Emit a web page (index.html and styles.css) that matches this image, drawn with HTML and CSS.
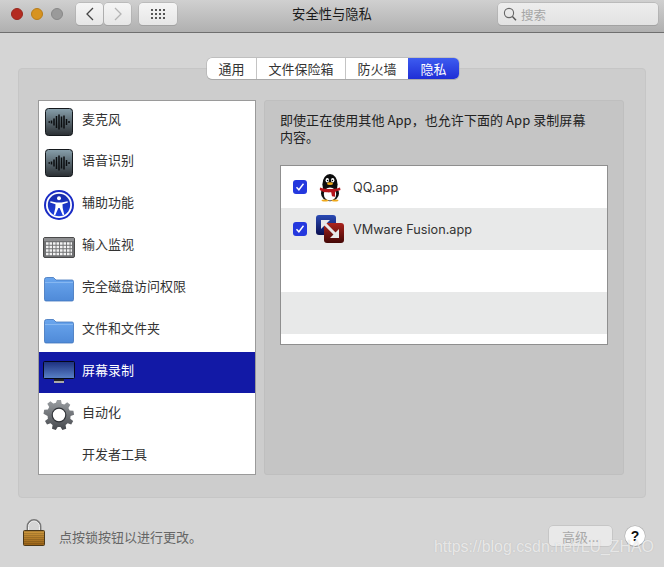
FILE: index.html
```html
<!DOCTYPE html>
<html lang="zh">
<head>
<meta charset="utf-8">
<title>安全性与隐私</title>
<link rel="stylesheet" href="styles.css">
</head>
<body>
<div class="window">
  <header class="titlebar">
    <div class="lights">
      <span class="light red"></span><span class="light amber"></span><span class="light grey"></span>
    </div>
    <div class="nav">
      <span class="btn nav-btn"><svg width="12" height="14" viewBox="0 0 12 14"><path d="M9 1 3 7l6 6" fill="none" stroke="#444" stroke-width="1.3"/></svg></span>
      <span class="btn nav-btn"><svg width="12" height="14" viewBox="0 0 12 14"><path d="m3 1 6 6-6 6" fill="none" stroke="#b4b4b4" stroke-width="1.3"/></svg></span>
    </div>
    <span class="btn grid-btn"><svg width="15" height="11" viewBox="0 0 15 11" fill="#555"><rect x="0" y="0" width="2" height="2"/><rect x="4" y="0" width="2" height="2"/><rect x="8" y="0" width="2" height="2"/><rect x="12" y="0" width="2" height="2"/><rect x="0" y="4" width="2" height="2"/><rect x="4" y="4" width="2" height="2"/><rect x="8" y="4" width="2" height="2"/><rect x="12" y="4" width="2" height="2"/><rect x="0" y="8" width="2" height="2"/><rect x="4" y="8" width="2" height="2"/><rect x="8" y="8" width="2" height="2"/><rect x="12" y="8" width="2" height="2"/></svg></span>
    <h1 class="title">安全性与隐私</h1>
    <div class="search">
      <svg width="14" height="14" viewBox="0 0 14 14"><circle cx="6" cy="6" r="4.6" fill="none" stroke="#666" stroke-width="1.1"/><path d="m9.4 9.4 3.6 3.8" stroke="#555" stroke-width="1.4"/></svg>
      <span>搜索</span>
    </div>
  </header>

  <main class="content">
    <nav class="tabs">
      <span class="tab t1">通用</span><span class="tab t2">文件保险箱</span><span class="tab t3">防火墙</span><span class="tab t4 active">隐私</span>
    </nav>
    <section class="panel">
      <ul class="sidebar">
        <li class="item"><span class="ico"><svg width="28" height="28" viewBox="0 0 28 28"><use href="#wave"/></svg></span><span class="label">麦克风</span></li>
        <li class="item"><span class="ico"><svg width="28" height="28" viewBox="0 0 28 28"><use href="#wave"/></svg></span><span class="label">语音识别</span></li>
        <li class="item"><span class="ico"><svg width="32" height="32" viewBox="0 0 32 32"><defs><linearGradient id="ab" x1="0" y1="0" x2="0" y2="1"><stop offset="0" stop-color="#1a2ba8"/><stop offset="1" stop-color="#1d3fe0"/></linearGradient></defs><circle cx="16" cy="16" r="15" fill="#1a2bc4"/><circle cx="16" cy="16" r="13" fill="#fff"/><circle cx="16" cy="16" r="11.2" fill="url(#ab)"/><circle cx="16" cy="9.2" r="2" fill="#fff"/><path d="M7.5 12.2 13.5 13.4h5l6-1.2.4 1.3-5.4 1.8.2 3.6 1.6 7h-1.6L16.6 19h-1.2l-3.1 6.9h-1.6l1.6-7 .2-3.6-5.4-1.8z" fill="#fff"/></svg></span><span class="label">辅助功能</span></li>
        <li class="item"><span class="ico"><svg width="32" height="21" viewBox="0 0 32 21"><rect x="0.500" y="0.500" width="31" height="20" rx="1.500" fill="#6f7072" stroke="#4a4a4a"/><rect x="1" y="1" width="30" height="3" fill="#8e8f91"/><path d="M3 6.500H29M3 10H29M3 13.500H29M3 17H29" stroke="#f2f2f2" stroke-width="2.500" stroke-dasharray="2.600 .9"/></svg></span><span class="label">输入监视</span></li>
        <li class="item"><span class="ico"><svg width="30" height="26" viewBox="0 0 30 26"><use href="#folder"/></svg></span><span class="label">完全磁盘访问权限</span></li>
        <li class="item"><span class="ico"><svg width="30" height="26" viewBox="0 0 30 26"><use href="#folder"/></svg></span><span class="label">文件和文件夹</span></li>
        <li class="item selected"><span class="ico"><svg width="32" height="24" viewBox="0 0 32 24"><defs><linearGradient id="scr" x1="0" y1="0" x2="0" y2="1"><stop offset="0" stop-color="#1c2f7e"/><stop offset="1" stop-color="#5a82c8"/></linearGradient></defs><rect x="0.5" y="0.5" width="31" height="17" rx="1" fill="url(#scr)" stroke="#05071c"/><rect x="11" y="18" width="10" height="3" fill="#222"/><rect x="11" y="20" width="10" height="2" fill="#aaa"/></svg></span><span class="label">屏幕录制</span></li>
        <li class="item"><span class="ico"><svg width="32" height="32" viewBox="0 0 32 32"><defs><linearGradient id="gear" x1="0" y1="0" x2="0" y2="1"><stop offset="0" stop-color="#9a9ea2"/><stop offset="1" stop-color="#45484d"/></linearGradient></defs><path d="M14 1h4l.7 3.700 2.600.9 2.900-2.400 3.100 2.600-1.900 3.200 1.300 2.400 3.700.3.700 4-3.500 1.300-.3 2.700 2.900 2.300-2 3.500-3.500-1.300-2.100 1.800.6 3.700-3.800 1.400-1.900-3.200h-2.800l-1.900 3.200-3.800-1.400.6-3.700-2.100-1.800-3.500 1.300-2-3.500 2.900-2.300-.3-2.700L.5 14.700l.7-4 3.700-.3 1.300-2.400-1.900-3.200 3.100-2.600 2.900 2.400 2.600-.9z" fill="url(#gear)"/><circle cx="16" cy="16" r="6.800" fill="#fff" stroke="#303338" stroke-width="1.200"/></svg></span><span class="label">自动化</span></li>
        <li class="item"><span class="ico"></span><span class="label">开发者工具</span></li>
      </ul>
      <div class="detail">
        <p class="desc">即使正在使用其他 App，也允许下面的 App 录制屏幕内容。</p>
        <div class="applist">
          <div class="row">
            <span class="check"><svg width="10" height="10" viewBox="0 0 10 10"><path d="m1.5 5.2 2.4 2.6 4.6-6" fill="none" stroke="#fff" stroke-width="1.4"/></svg></span>
            <span class="appbox"><svg width="26" height="31" viewBox="0 0 26 30"><ellipse cx="13" cy="12" rx="7.600" ry="10.500" fill="#0c0c0c"/><ellipse cx="13" cy="21" rx="9" ry="7.800" fill="#111"/><ellipse cx="13" cy="21.500" rx="6.200" ry="6.600" fill="#fff"/><ellipse cx="10.300" cy="7.800" rx="1.700" ry="2.200" fill="#fff"/><ellipse cx="15.700" cy="7.800" rx="1.700" ry="2.200" fill="#fff"/><circle cx="10.600" cy="8" r=".8" fill="#000"/><circle cx="15.400" cy="8" r=".8" fill="#000"/><ellipse cx="13" cy="11.200" rx="3" ry="1.400" fill="#f0a91c"/><path d="M3 15c6 2 14 2 20 0l.5 2.500-5.500 1.800v5l-3-.5-.8-4c-2 .2-3 .2-4.400 0L6.500 19.500 2.800 17.600z" fill="#b5161c"/><ellipse cx="8" cy="28" rx="3.400" ry="1.100" fill="#f0a91c"/><ellipse cx="18" cy="28" rx="3.400" ry="1.100" fill="#f0a91c"/></svg></span>
            <span class="appname">QQ.app</span>
          </div>
          <div class="row alt">
            <span class="check"><svg width="10" height="10" viewBox="0 0 10 10"><path d="m1.5 5.2 2.4 2.6 4.6-6" fill="none" stroke="#fff" stroke-width="1.4"/></svg></span>
            <span class="appbox"><svg width="28" height="29" viewBox="0 0 28 29"><defs><linearGradient id="vb" x1="0" y1="0" x2="0" y2="1"><stop offset="0" stop-color="#2a4ab4"/><stop offset="1" stop-color="#0a0f50"/></linearGradient><linearGradient id="vr" x1="0" y1="0" x2="0" y2="1"><stop offset="0" stop-color="#ab241e"/><stop offset="1" stop-color="#430806"/></linearGradient></defs><rect x="0" y="0" width="20" height="20" rx="3" fill="url(#vb)"/><rect x="8" y="8" width="20" height="20" rx="3" fill="url(#vr)"/><path d="M5 5H14L5 14Z" fill="#e8e9e9"/><path d="M8 8 20.500 20.500" stroke="#e8e9e9" stroke-width="3"/><path d="M23 14V23H14Z" fill="#e8e9e9"/></svg></span>
            <span class="appname">VMware Fusion.app</span>
          </div>
          <div class="row"></div>
          <div class="row alt"></div>
        </div>
      </div>
    </section>
    <footer class="footer">
      <svg class="lock" width="24" height="28" viewBox="0 0 24 28"><defs><linearGradient id="lk" x1="0" y1="0" x2="0" y2="1"><stop offset="0" stop-color="#cf9a3f"/><stop offset="1" stop-color="#9a6216"/></linearGradient><pattern id="lines" width="4" height="2" patternUnits="userSpaceOnUse"><rect width="4" height="1" fill="#000" opacity=".14"/></pattern></defs><path d="M5.500 12V7.500a6.500 6.500 0 0 1 13 0V12" fill="none" stroke="#777" stroke-width="1.800"/><path d="M6.500 12V7.500a5.500 5.500 0 0 1 11 0V12" fill="none" stroke="#f2f2f2" stroke-width="1"/><rect x="1.500" y="11.500" width="21" height="15" rx="1" fill="url(#lk)" stroke="#4c3818"/><rect x="2" y="12" width="20" height="14" fill="url(#lines)"/></svg>
      <span class="hint">点按锁按钮以进行更改。</span>
      <span class="advanced">高级...</span>
      <span class="help">?</span>
    </footer>
  </main>
  <span class="watermark">https://blog.csdn.net/LU_ZHAO</span>
</div>
<svg class="defs" width="0" height="0">
  <defs>
    <linearGradient id="wb" x1="0" y1="0" x2="0" y2="1"><stop offset="0" stop-color="#88a0ac"/><stop offset="1" stop-color="#2a2e32"/></linearGradient>
    <linearGradient id="fb" x1="0" y1="0" x2="0" y2="1"><stop offset="0" stop-color="#6aa6ee"/><stop offset="1" stop-color="#4f8ad8"/></linearGradient>
    <symbol id="wave" viewBox="0 0 28 28">
      <rect x="0.500" y="0.500" width="27" height="27" rx="3" fill="url(#wb)" stroke="#14181c"/>
      <path d="M3.500 14h1.500M6.500 12.500v3M9 10.500v7M11.500 8v12M14 6.500v15M16.500 8.500v11M19 7.500v13M21.500 11v6M24 13v2" stroke="#0b0d0f" stroke-width="1.500" fill="none"/>
    </symbol>
    <symbol id="folder" viewBox="0 0 30 26">
      <path d="M.5 3.500Q.5 1.500 2.500 1.500H9.500L12 4H28Q29.500 4 29.500 5.500V23.500Q29.500 25 28 25H2Q.5 25 .5 23.500Z" fill="url(#fb)" stroke="#3f74bb" stroke-width=".8"/>
      <path d="M1 6.500H29" stroke="#8fbdf2" stroke-width=".8"/>
    </symbol>
  </defs>
</svg>
</body>
</html>
```
FILE: styles.css
```css
* { box-sizing: border-box; }
html, body { margin: 0; padding: 0; }
body {
  width: 664px;
  height: 567px;
  overflow: hidden;
  background: #d5d5d5;
  font-family: "Noto Sans CJK SC", "Liberation Sans", sans-serif;
  font-size: 13px;
  color: #2a2a2a;
}
.defs { display: block; height: 0; }
.window { position: relative; width: 664px; height: 567px; display: flex; flex-direction: column; }

/* title bar */
.titlebar {
  height: 33px;
  flex: none;
  display: flex;
  align-items: flex-start;
  padding: 3px 6px 0 11px;
  background: linear-gradient(#d0d0d0, #b0b0b0);
  border-bottom: 1px solid #6f6f6f;
}
.lights { display: flex; gap: 8px; margin-top: 5px; flex: none; }
.light { width: 12px; height: 12px; border-radius: 50%; }
.red { background: #b42b20; border: 1px solid #97271d; }
.amber { background: #d7931f; border: 1px solid #b87d1a; }
.grey { background: #9a9a9a; border: 1px solid #888; }
.btn {
  display: flex;
  align-items: center;
  justify-content: center;
  flex: none;
  height: 22px;
  background: linear-gradient(#f5f5f5, #e6e6e6);
  border-radius: 4px;
  box-shadow: 0 0 0 .5px #a8a8a8, 0 1px 0 #9c9c9c;
}
.nav { display: flex; gap: 1px; margin-left: 13px; flex: none; }
.nav-btn { width: 27px; }
.grid-btn { width: 38px; margin-left: 8px; }
.title {
  flex: none;
  margin: 0 0 0 18px;
  width: 274px;
  font-size: 13.300px;
  line-height: 22px;
  font-weight: 400;
  color: #1a1a1a;
  text-align: center;
}
.search {
  flex: none;
  margin-left: 29px;
  width: 160px;
  height: 22px;
  display: flex;
  align-items: center;
  gap: 4px;
  padding-left: 5px;
  background: linear-gradient(#ededed, #e2e2e2);
  border-radius: 4px;
  box-shadow: 0 0 0 .5px #a8a8a8, 0 1px 0 #9c9c9c;
  color: #a5a5a5;
  font-size: 12.500px;
}

/* content */
.content { flex: 1; display: flex; flex-direction: column; padding: 25px 18px 0; }
.tabs {
  position: relative;
  z-index: 1;
  display: flex;
  align-self: flex-start;
  margin-left: 189px;
  height: 21px;
  border-radius: 5px;
  box-shadow: 0 0 0 .5px #a9a9a9, 0 1px 0 #a9a9a9;
  background: #fff;
}
.tab { display: flex; align-items: center; justify-content: center; font-size: 13px; color: #333; border-right: 1px solid #c4c4c4; }
.t1 { width: 50px; }
.t2 { width: 89px; }
.t3 { width: 62px; border-right: 0; }
.t4 { width: 51px; border: 0; }
.active { background: linear-gradient(#3d5cf0, #1f2ed6); color: #fff; border-radius: 0 5px 5px 0; }

.panel {
  margin-top: -11px;
  height: 430px;
  flex: none;
  display: flex;
  gap: 8px;
  padding: 31px 21px 22px 19px;
  background: #cdcdcd;
  border: 1px solid #c6c6c6;
  border-radius: 4px;
}
.sidebar {
  width: 218px;
  margin: 0;
  padding: 0;
  list-style: none;
  background: #fff;
  border: 1px solid #9a9a9a;
  flex: none;
  overflow: hidden;
}
.item {
  height: 42px;
  flex: none;
  display: flex;
  align-items: center;
  font-size: 13px;
  color: #333;
}
.sidebar .item:first-child { height: 41px; }
.selected { height: 41px; margin-bottom: 1px; background: #1219a6; color: #fff; }
.ico { width: 43px; flex: none; display: flex; justify-content: center; padding-right: 3px; }
.label { margin-bottom: 7px; }

.detail {
  width: 360px;
  flex: none;
  background: #c5c5c5;
  border: 1px solid #bfbfbf;
  border-radius: 3px;
  padding: 10px 15px 0;
  display: flex;
  flex-direction: column;
}
.desc { margin: 0; width: 312px; font-size: 13px; line-height: 17px; letter-spacing: .06px; color: #222; height: 54px; }
.applist { width: 328px; height: 180px; background: #fff; border: 1px solid #8f8f8f; overflow: hidden; }
.row { height: 42px; display: flex; align-items: center; background: #fff; }
.alt { background: #e8e9e9; }
.check {
  width: 14px;
  height: 14px;
  margin-left: 12px;
  flex: none;
  display: flex;
  align-items: center;
  justify-content: center;
  border-radius: 3px;
  background: #2438de;
}
.appbox { width: 30px; flex: none; margin-left: 8px; display: flex; justify-content: center; }
.appname { margin-left: 8px; font-family: "Inter", "Liberation Sans", sans-serif; font-size: 12.700px; color: #333; }

/* footer */
.footer { flex: 1; display: flex; align-items: flex-start; padding-top: 21px; }
.lock { margin-left: 4px; flex: none; }
.hint { margin-left: 13px; margin-top: 9px; font-size: 13px; line-height: 17px; color: #666; }
.advanced {
  margin-left: auto;
  margin-top: 7px;
  width: 63px;
  height: 20px;
  display: flex;
  align-items: center;
  justify-content: center;
  font-size: 13px;
  color: #a8a8a8;
  background: #e9e9e9;
  border-radius: 4px;
  box-shadow: 0 0 0 .5px #b8b8b8;
}
.help {
  margin-left: 13px;
  margin-right: 1px;
  margin-top: 7px;
  width: 20px;
  height: 20px;
  display: flex;
  align-items: center;
  justify-content: center;
  border-radius: 50%;
  background: #fff;
  box-shadow: 0 0 0 .5px #aaa, 0 1px 0 #999;
  font-family: "Liberation Sans", sans-serif;
  font-weight: 700;
  font-size: 14px;
  color: #111;
}
.watermark {
  position: absolute;
  left: 434px;
  top: 537px;
  font-family: "Liberation Sans", sans-serif;
  font-size: 15.900px;
  line-height: 20px;
  color: rgba(255, 255, 255, .68);
  text-shadow: 0 0 1px rgba(120, 120, 120, .35);
  white-space: nowrap;
}
```
